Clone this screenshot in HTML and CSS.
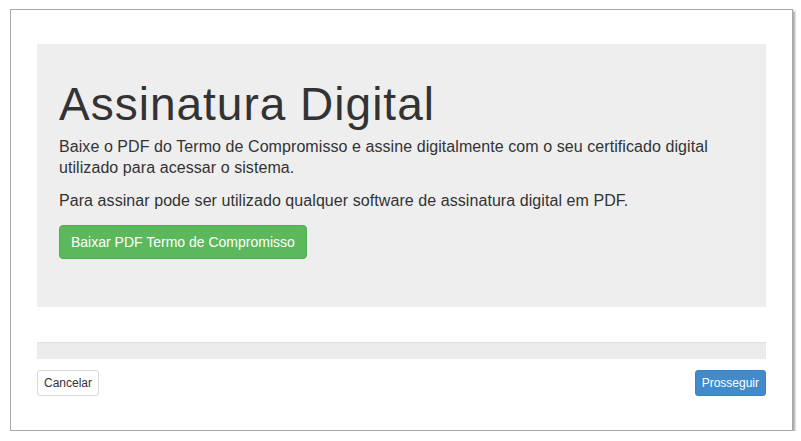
FILE: index.html
```html
<!DOCTYPE html>
<html lang="pt-BR">
<head>
<meta charset="utf-8">
<title>Assinatura Digital</title>
<link rel="stylesheet" href="styles.css">
</head>
<body>
<div class="window">
  <div class="jumbotron">
    <h1 class="title">Assinatura Digital</h1>
    <p class="lead">Baixe o PDF do Termo de Compromisso e assine digitalmente com o seu certificado digital utilizado para acessar o sistema.</p>
    <p class="lead lead-second">Para assinar pode ser utilizado qualquer software de assinatura digital em PDF.</p>
    <a class="btn btn-success" href="#">Baixar PDF Termo de Compromisso</a>
  </div>
  <div class="progress"></div>
  <div class="actions">
    <button class="btn btn-sm btn-default" type="button">Cancelar</button>
    <button class="btn btn-sm btn-primary" type="button">Prosseguir</button>
  </div>
</div>
</body>
</html>
```

FILE: styles.css
```css
* {
  box-sizing: border-box;
}

body {
  margin: 0;
  background: #ffffff;
  font-family: "Liberation Sans", Arial, sans-serif;
  color: #333333;
}

.window {
  margin: 9px 0 0 10px;
  width: 783px;
  height: 422px;
  border: 1px solid #a9a9a9;
  box-shadow: 2px 2px 2px rgba(0, 0, 0, 0.35);
  background: #ffffff;
  padding: 34px 26px 34px 26px;
  display: flex;
  flex-direction: column;
}

.jumbotron {
  background: #eeeeee;
  height: 263px;
  padding: 35px 22px 48px 22px;
  display: flex;
  flex-direction: column;
  align-items: flex-start;
}

.title {
  margin: 0 0 7px 0;
  font-size: 46px;
  line-height: 50px;
  font-weight: 400;
  letter-spacing: 1px;
  color: #333333;
}

.lead {
  margin: 0;
  font-size: 16px;
  line-height: 21px;
  letter-spacing: 0.07px;
  color: #333333;
}

.lead-second {
  margin-top: 12px;
}

.btn {
  display: inline-block;
  font-family: "Liberation Sans", Arial, sans-serif;
  font-size: 14px;
  line-height: 20px;
  padding: 6px 12px;
  border: 1px solid transparent;
  border-radius: 4px;
  text-decoration: none;
  cursor: pointer;
}

.btn-success {
  margin-top: 14px;
  background: #5cb85c;
  border-color: #4cae4c;
  color: #ffffff;
  padding: 6px 11px;
}

.progress {
  margin-top: 35px;
  height: 17px;
  background: #ececec;
  box-shadow: inset 0 1px 2px rgba(0, 0, 0, 0.06);
}

.actions {
  margin-top: 11px;
  display: flex;
  justify-content: space-between;
  align-items: flex-start;
}

.btn-sm {
  font-size: 12px;
  line-height: 16px;
  padding: 4px 6px;
  border-radius: 3px;
}

.btn-default {
  background: #ffffff;
  border-color: #d9d9d9;
  color: #333333;
}

.btn-primary {
  background: #428bca;
  border-color: #3b82c4;
  color: #ffffff;
}
```
